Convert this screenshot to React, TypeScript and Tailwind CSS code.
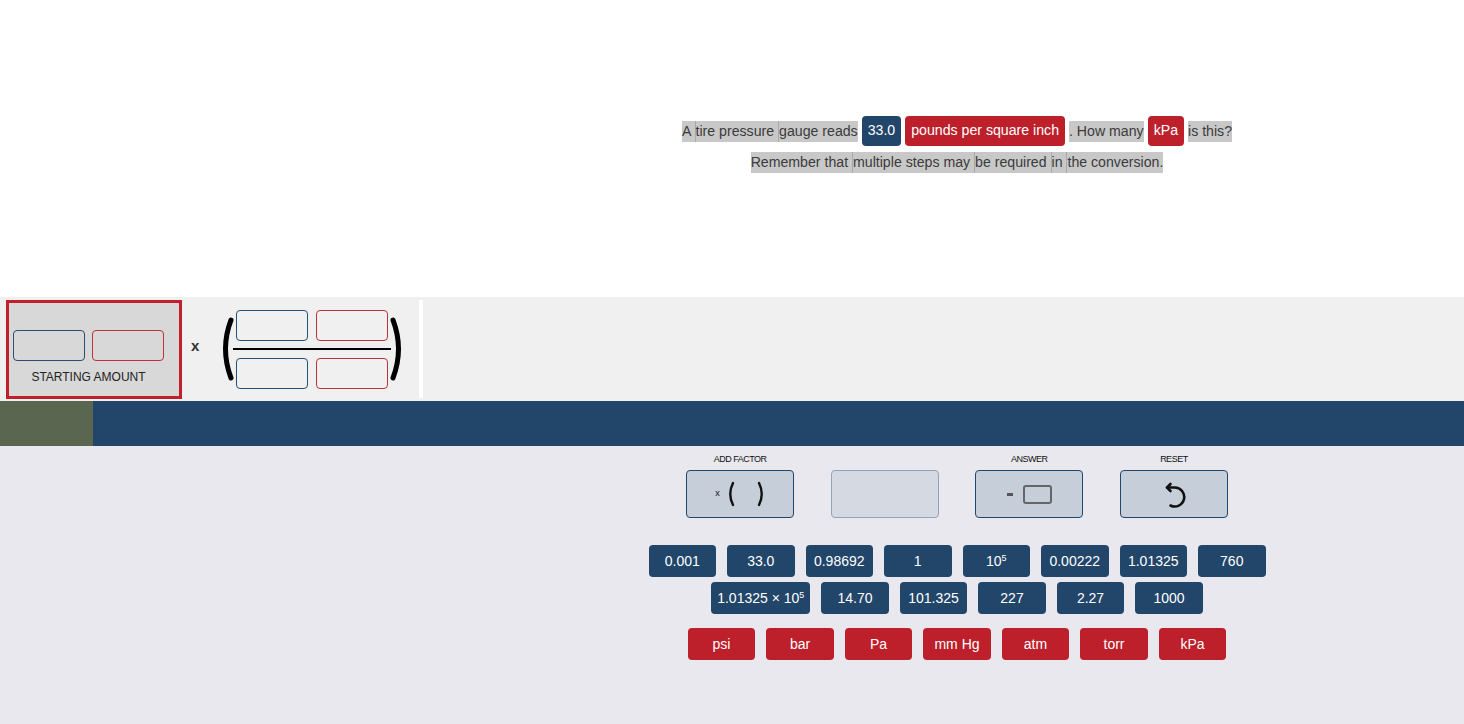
import React from "react";

const BLUE = "bg-[#22456a]";
const RED = "bg-[#bd1f2b]";

function Word({ text, first, after }: { text: string; first?: boolean; after?: boolean }) {
  return (
    <span
      className={`inline-block whitespace-pre bg-[#c8c8c8] leading-[21px] text-[#3b3b3b] ${
        first ? "" : "border-l border-[#a9a9a9]"
      } ${after ? "ml-[4px]" : ""}`}
    >
      {text}
    </span>
  );
}

function Badge({ children, red }: { children: React.ReactNode; red?: boolean }) {
  return (
    <span
      className={`ml-[4px] inline-flex h-[30px] items-center rounded-[4px] px-[6px] text-white ${red ? RED : BLUE}`}
    >
      {children}
    </span>
  );
}

function Slot({ red }: { red?: boolean }) {
  return (
    <div
      className={`h-[31px] w-[72px] rounded-[4px] border ${red ? "border-[#c0303a]" : "border-[#2b4d72]"}`}
    />
  );
}

function Paren({ right }: { right?: boolean }) {
  return (
    <svg width="18" height="64" viewBox="0 0 18 64" className="shrink-0">
      <path
        d={right ? "M4 3 Q15 32 4 61" : "M14 3 Q3 32 14 61"}
        fill="none"
        stroke="#000"
        strokeWidth="5"
        strokeLinecap="round"
      />
    </svg>
  );
}

function SmallParen({ right }: { right?: boolean }) {
  return (
    <svg width="8" height="26" viewBox="0 0 8 26" className="shrink-0">
      <path
        d={right ? "M2 2 Q7.5 13 2 24" : "M6 2 Q0.5 13 6 24"}
        fill="none"
        stroke="#111"
        strokeWidth="2.4"
        strokeLinecap="round"
      />
    </svg>
  );
}

function ToolButton({ children, disabled }: { children?: React.ReactNode; disabled?: boolean }) {
  return (
    <div
      className={`flex h-[48px] w-[108px] items-center justify-center rounded-[4px] border ${
        disabled ? "border-[#93a3b8] bg-[#d5dae2]" : "border-[#22456a] bg-[#c6cfd9]"
      }`}
    >
      {children}
    </div>
  );
}

function Chip({ children, red, wide }: { children: React.ReactNode; red?: boolean; wide?: boolean }) {
  return (
    <div
      className={`flex h-[32px] items-center justify-center rounded-[4px] text-[14px] text-white ${
        wide ? "w-[99px]" : "w-[67.5px]"
      } ${red ? RED : BLUE}`}
    >
      {children}
    </div>
  );
}

function Pow({ base }: { base: string }) {
  return (
    <span>
      {base}
      <span className="relative top-[-5px] text-[9px]">5</span>
    </span>
  );
}

const ROW1: React.ReactNode[] = ["0.001", "33.0", "0.98692", "1", <Pow key="p" base="10" />, "0.00222", "1.01325", "760"];
const ROW2: React.ReactNode[] = ["14.70", "101.325", "227", "2.27", "1000"];
const UNITS = ["psi", "bar", "Pa", "mm Hg", "atm", "torr", "kPa"];

export default function App() {
  return (
    <div className="min-h-screen bg-white font-['Liberation_Sans',Arial,sans-serif] text-[14px]">
      {/* question */}
      <div className="h-[297px] pl-[450px] pt-[116px] text-[14.15px]">
        <div className="flex h-[30px] items-center justify-center">
          <Word text="A " first />
          <Word text="tire pressure " />
          <Word text="gauge reads" />
          <Badge>33.0</Badge>
          <Badge red>pounds per square inch</Badge>
          <Word text=". How many" first after />
          <Badge red>kPa</Badge>
          <Word text="is this?" first after />
        </div>
        <div className="mt-[6px] flex h-[21px] items-center justify-center">
          <Word text="Remember that " first />
          <Word text="multiple steps may " />
          <Word text="be required " />
          <Word text="in " />
          <Word text="the conversion." />
        </div>
      </div>

      {/* equation band */}
      <div className="flex h-[104px] items-center bg-[#f0f0f0]">
        <div className="ml-[6px] flex h-[99px] w-[176px] flex-col items-center border-[3px] border-[#c0202a] bg-[#d8d8d8] pl-[4px] pr-[15px] pt-[27px]">
          <div className="flex gap-[7px]">
            <Slot />
            <Slot red />
          </div>
          <div className="mt-[9px] whitespace-nowrap text-[12px] leading-[14px] text-[#222]">STARTING AMOUNT</div>
        </div>
        <div className="relative top-[-4px] ml-[9px] text-[15px] font-bold leading-none text-[#333]">x</div>
        <div className="ml-[18px] flex items-center">
          <Paren />
          <div className="-ml-[2px] flex w-[158px] flex-col">
            <div className="flex gap-[8px] px-[3px]">
              <Slot />
              <Slot red />
            </div>
            <div className="mt-[7px] h-[2px] bg-black" />
            <div className="mt-[8px] flex gap-[8px] px-[3px]">
              <Slot />
              <Slot red />
            </div>
          </div>
          <div className="-ml-[2px]">
            <Paren right />
          </div>
        </div>
        <div className="ml-[12px] h-[98px] w-[4px] bg-white" />
      </div>

      {/* bar */}
      <div className="flex h-[45px] bg-[#22456a]">
        <div className="w-[93px] bg-[#5b6651]" />
      </div>

      {/* controls */}
      <div className="h-[278px] bg-[#e9e8ef] pl-[450px] pt-[8px]">
        <div className="flex justify-center gap-[36.6px]">
          {[
            { label: "ADD FACTOR", body: (
              <div className="flex items-center text-[#111]">
                <span className="mr-[7px] text-[9px]">x</span>
                <SmallParen />
                <span className="w-[22px]" />
                <SmallParen right />
              </div>
            ) },
            { label: "", body: null, disabled: true },
            { label: "ANSWER", body: (
              <div className="flex items-center">
                <span className="mr-[10px] h-[3px] w-[6px] bg-[#555]" />
                <span className="h-[19px] w-[29px] rounded-[3px] border-2 border-[#666]" />
              </div>
            ) },
            { label: "RESET", body: (
              <svg width="30" height="30" viewBox="0 0 30 30" fill="none" stroke="#111" strokeWidth="2.6" strokeLinecap="round" strokeLinejoin="round">
                <path d="M8 8.5 L15.5 8.5 A9.5 9.5 0 1 1 11.5 26.5" />
                <path d="M11.5 5 L8 8.5 L11.5 12" />
              </svg>
            ) },
          ].map((b, i) => (
            <div key={i} className="flex w-[108px] flex-col items-center">
              <div className="h-[10px] whitespace-nowrap text-[9px] leading-[10px] tracking-[-0.5px] text-[#111]">{b.label}</div>
              <div className="mt-[6px]">
                <ToolButton disabled={b.disabled}>{b.body}</ToolButton>
              </div>
            </div>
          ))}
        </div>

        <div className="mt-[27px] flex justify-center gap-[11px]">
          {ROW1.map((v, i) => (
            <Chip key={i}>{v}</Chip>
          ))}
        </div>
        <div className="mt-[5px] flex justify-center gap-[11px]">
          <Chip wide>
            <span>
              1.01325 × 10<span className="relative top-[-5px] text-[9px]">5</span>
            </span>
          </Chip>
          {ROW2.map((v, i) => (
            <Chip key={i}>{v}</Chip>
          ))}
        </div>
        <div className="mt-[14px] flex justify-center gap-[11px]">
          {UNITS.map((u) => (
            <Chip key={u} red>
              {u}
            </Chip>
          ))}
        </div>
      </div>
    </div>
  );
}
